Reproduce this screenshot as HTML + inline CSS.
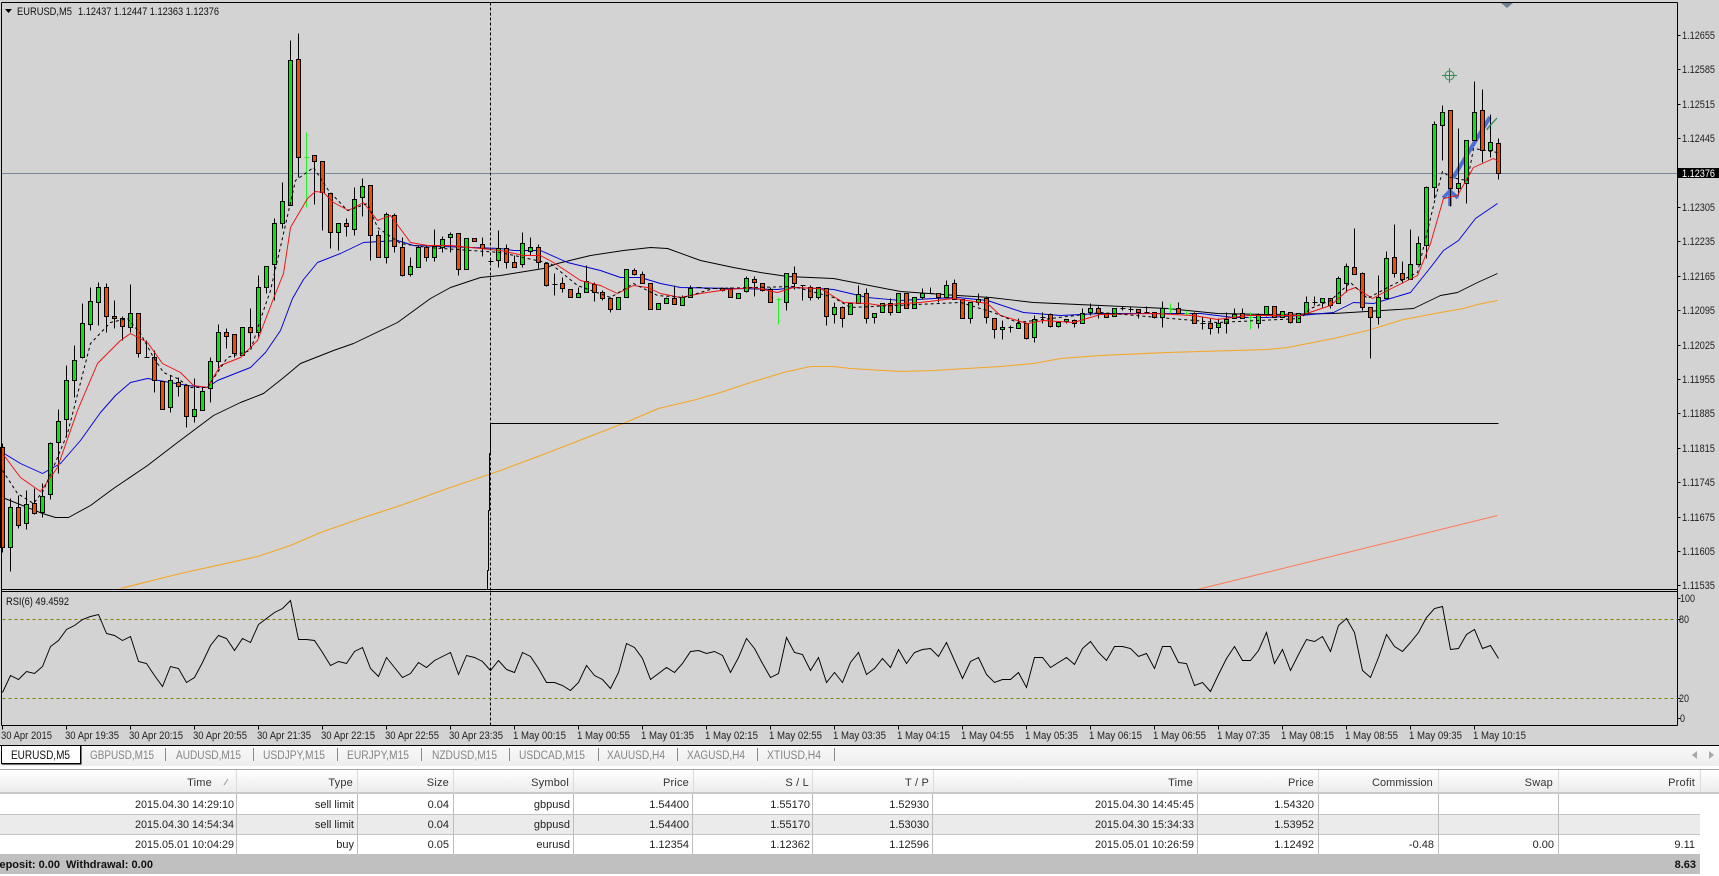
<!DOCTYPE html>
<html><head><meta charset="utf-8"><title>EURUSD,M5</title>
<style>
html,body{margin:0;padding:0;background:#fff;width:1719px;height:876px;overflow:hidden}
svg{display:block;position:absolute;left:0;top:0}
text{font-family:"Liberation Sans",sans-serif;font-size:11px;fill:#111}
.ax text{font-size:11px;fill:#222}
.tb text{font-size:11px;fill:#222;text-anchor:end}
.hd text{font-size:11px;fill:#333;text-anchor:end;letter-spacing:.2px}
.tab text{font-size:11.5px;fill:#858585}
</style></head><body>
<svg width="1719" height="876" viewBox="0 0 1719 876" xmlns="http://www.w3.org/2000/svg">
<defs>
<linearGradient id="hg" x1="0" y1="0" x2="0" y2="1"><stop offset="0" stop-color="#ffffff"/><stop offset="1" stop-color="#ececec"/></linearGradient>
<linearGradient id="tg" x1="0" y1="0" x2="0" y2="1"><stop offset="0" stop-color="#f8f8f8"/><stop offset="1" stop-color="#eeeeee"/></linearGradient>
</defs>
<rect x="0" y="0" width="1719" height="746" fill="#d3d3d3"/>

<g fill="none" stroke-linejoin="round" transform="translate(.5 .5)">
<path d="M1 173H1677" stroke="#778899"/>
<path d="M120 588L180 573L257 556L290 545L320 532L363 517L400 505L447 488L500 470L548 452L625 422L658 408L692 400L720 392L750 382L783 372L810 366L833 366L850 368L900 371L933 370L1000 366L1033 363L1060 358L1100 355L1167 352L1200 351L1267 349L1287 347L1333 338L1367 330L1403 319L1440 312L1463 308L1477 304L1497 300" stroke="#f5a623" stroke-width="1.1"/>
<path d="M1197 589L1497 515" stroke="#ff7a50" stroke-width="1"/>
<path d="M2 497L42 513L55 517L68 517L90 505L113 488L147 465L177 442L213 415L240 402L263 393L282 378L300 363L333 350L353 343L397 322L430 298L450 287L480 277L500 275L543 268L557 263L590 255L623 250L650 247L667 248L700 260L733 267L760 272L787 276L833 278L900 291L957 295L990 297L1033 302L1100 305L1167 308L1217 313L1267 314L1333 313L1350 312L1413 308L1440 295L1457 292L1477 282L1497 273" stroke="#000" stroke-width=".95"/>
<path d="M490 423H1498M490 423V453H489V510H488V570H487V589" stroke="#000"/>
<path d="M2 452L20 463L42 473L60 463L80 440L100 412L115 395L130 382L147 378L187 385L207 387L217 380L250 367L265 352L280 330L292 298L303 279L317 262L340 253L363 242L397 240L413 245L500 248L513 250L540 250L567 262L600 270L620 277L640 277L660 283L680 287L733 288L777 289L793 287L817 288L833 289L867 297L900 300L933 298L957 297L987 300L1023 312L1060 315L1100 313L1167 313L1200 313L1233 317L1267 317L1300 315L1333 312L1353 302L1373 303L1400 295L1410 292L1430 267L1443 250L1458 240L1475 218L1497 203" stroke="#0000d8" stroke-width=".95"/>
</g>

<!-- blue trade markers (behind candles) -->
<path d="M1453 178L1490 117" stroke="#4a6ed8" stroke-width="4" fill="none"/>
<path d="M1443 198L1450 191L1458 198M1450 189V206" stroke="#4a6ed8" stroke-width="3.6" fill="none"/>

<!-- wicks -->
<path transform="translate(.5 .5)" fill="none" stroke="#000" d="M2 443V552M10 498V571M18 495V528M26 490V529M34 488V514M42 483V517M50 442V499M58 409V473M66 365V437M74 345V397M82 303V358M90 287V330M98 282V325M106 283V332M114 300V328M122 316V340M130 284V332M138 313V357M146 340V357M154 350V392M162 381V409M170 375V412M178 377V396M186 385V427M194 378V422M202 387V410M210 357V402M218 324V368M226 328V348M234 334V357M242 327V355M250 308V347M258 275V337M266 266V293M274 218V300M282 182V228M290 40V205M298 33V177M314 155V204M322 161V230M330 193V248M338 223V250M346 218V236M354 187V235M362 178V216M370 185V260M378 230V257M386 212V263M394 213V252M402 237V276M410 257V276M418 245V267M426 245V261M434 229V261M442 236V252M450 232V252M458 233V275M466 238V269M474 238V241M482 237V256M490 257V265M498 230V267M506 244V268M514 255V267M522 232V267M530 237V255M538 244V268M546 263V286M554 273V295M562 277V292M570 289V297M578 287V297M586 265V292M594 282V301M602 290V300M610 297V312M618 297V309M626 269V297M634 268V275M642 271V283M650 283V309M658 303V309M666 297V303M674 285V304M682 295V305M690 285V297M722 287V291M730 287V297M738 293V298M746 276V292M754 276V296M762 283V291M770 287V302M786 273V310M794 266V289M802 285V300M810 285V300M818 287V299M826 288V325M834 302V323M842 306V327M850 303V314M858 285V303M866 288V323M874 313V323M882 303V312M890 298V315M898 293V312M906 293V308M914 297V308M922 288V299M930 287V293M938 293V302M946 280V298M954 279V299M962 299V318M970 302V323M978 293V305M986 296V323M994 318V338M1002 320V339M1010 325V332M1018 318V328M1026 323V339M1034 315V342M1042 312V323M1050 313V327M1058 322V327M1066 319V323M1074 319V327M1082 308V323M1090 303V315M1098 306V318M1106 313V317M1114 308V316M1122 306V310M1130 306V312M1138 309V318M1146 306V313M1154 312V318M1162 301V327M1178 302V313M1194 312V323M1202 317V329M1210 318V334M1218 318V333M1226 312V333M1234 308V318M1242 308V318M1258 313V328M1266 306V316M1274 306V317M1282 311V317M1290 312V323M1298 313V322M1306 296V313M1314 296V305M1322 298V307M1330 298V308M1338 276V303M1346 263V292M1354 228V274M1362 272V310M1370 307V358M1378 275V324M1386 251V298M1394 224V277M1402 261V283M1410 229V279M1418 236V264M1426 186V258M1434 121V198M1442 105V160M1450 110V206M1458 128V195M1466 140V203M1474 81V140M1482 89V162M1490 114V157M1498 138V179"/>
<!-- doji ticks -->
<path transform="translate(.5 .5)" fill="none" stroke="#000" d="M144 357h5M488 261h5M552 284h5M696 287h5M704 288h5M712 288h5M800 285h5M928 293h5M1008 327h5M1040 317h5M1120 308h5M1128 309h5M1144 312h5M1200 323h5M1312 302h5"/>
<!-- lime dojis -->
<path transform="translate(.5 .5)" fill="none" stroke="#22f522" d="M306 132V207M304 157h5M778 297V324M776 299h5M1170 303V313M1168 308h5M1186 310V315M1184 313h5M1250 312V329M1248 317h5"/>
<!-- green bodies -->
<path transform="translate(.5 .5)" fill="#0de40d" stroke="#000" d="M8 507h4V547h-4zM24 504h4V523h-4zM40 496h4V512h-4zM48 443h4V494h-4zM56 421h4V442h-4zM64 380h4V419h-4zM72 360h4V380h-4zM80 323h4V357h-4zM88 301h4V324h-4zM96 287h4V302h-4zM128 313h4V327h-4zM168 380h4V407h-4zM192 409h4V416h-4zM200 391h4V410h-4zM208 361h4V388h-4zM216 332h4V361h-4zM240 327h4V355h-4zM256 287h4V332h-4zM264 266h4V287h-4zM272 223h4V264h-4zM280 201h4V223h-4zM288 60h4V205h-4zM336 223h4V232h-4zM352 199h4V229h-4zM360 186h4V197h-4zM384 214h4V257h-4zM408 266h4V274h-4zM416 247h4V267h-4zM432 246h4V257h-4zM440 239h4V247h-4zM448 234h4V237h-4zM464 238h4V269h-4zM496 248h4V260h-4zM520 243h4V264h-4zM528 247h4V251h-4zM576 293h4V297h-4zM584 281h4V292h-4zM616 297h4V309h-4zM624 269h4V297h-4zM656 303h4V309h-4zM664 298h4V303h-4zM680 297h4V305h-4zM688 288h4V297h-4zM736 293h4V298h-4zM744 278h4V291h-4zM784 273h4V302h-4zM816 287h4V297h-4zM832 307h4V314h-4zM848 303h4V314h-4zM856 294h4V303h-4zM872 313h4V317h-4zM880 303h4V312h-4zM896 293h4V312h-4zM912 297h4V308h-4zM920 293h4V297h-4zM944 285h4V297h-4zM968 302h4V318h-4zM976 299h4V302h-4zM1000 327h4V329h-4zM1016 323h4V328h-4zM1032 319h4V337h-4zM1056 322h4V326h-4zM1064 319h4V321h-4zM1080 313h4V323h-4zM1088 308h4V312h-4zM1112 308h4V316h-4zM1160 308h4V317h-4zM1216 323h4V327h-4zM1224 319h4V323h-4zM1232 314h4V318h-4zM1256 314h4V323h-4zM1264 306h4V314h-4zM1280 311h4V317h-4zM1296 313h4V322h-4zM1304 302h4V313h-4zM1320 298h4V302h-4zM1336 278h4V303h-4zM1344 266h4V283h-4zM1376 297h4V317h-4zM1384 258h4V298h-4zM1408 264h4V279h-4zM1416 243h4V264h-4zM1424 187h4V245h-4zM1432 124h4V187h-4zM1440 112h4V125h-4zM1456 183h4V188h-4zM1464 140h4V183h-4zM1472 112h4V140h-4zM1488 142h4V150h-4z"/>
<!-- red bodies -->
<path transform="translate(.5 .5)" fill="#f04c0c" stroke="#000" d="M0 447h4V547h-4zM16 507h4V525h-4zM32 503h4V513h-4zM104 287h4V316h-4zM112 316h4V318h-4zM120 318h4V326h-4zM136 313h4V353h-4zM152 357h4V380h-4zM160 381h4V409h-4zM176 382h4V386h-4zM184 385h4V416h-4zM224 332h4V336h-4zM232 334h4V353h-4zM248 327h4V332h-4zM296 59h4V157h-4zM312 155h4V161h-4zM320 161h4V192h-4zM328 193h4V232h-4zM344 223h4V226h-4zM368 185h4V235h-4zM376 235h4V257h-4zM392 215h4V246h-4zM400 247h4V275h-4zM424 247h4V257h-4zM456 233h4V269h-4zM472 238h4V241h-4zM480 244h4V248h-4zM504 248h4V262h-4zM512 262h4V267h-4zM536 247h4V262h-4zM544 263h4V285h-4zM560 283h4V288h-4zM568 289h4V297h-4zM592 284h4V292h-4zM600 292h4V298h-4zM608 298h4V309h-4zM632 270h4V274h-4zM640 274h4V283h-4zM648 283h4V309h-4zM672 298h4V304h-4zM720 288h4V290h-4zM728 289h4V297h-4zM752 279h4V282h-4zM760 283h4V290h-4zM768 289h4V302h-4zM792 273h4V283h-4zM808 287h4V297h-4zM824 288h4V316h-4zM840 307h4V318h-4zM864 293h4V318h-4zM888 303h4V312h-4zM904 293h4V308h-4zM936 293h4V297h-4zM952 283h4V299h-4zM960 299h4V318h-4zM984 298h4V317h-4zM992 318h4V329h-4zM1024 323h4V338h-4zM1048 314h4V326h-4zM1072 320h4V323h-4zM1096 308h4V313h-4zM1104 313h4V317h-4zM1136 309h4V312h-4zM1152 312h4V317h-4zM1176 308h4V313h-4zM1192 313h4V323h-4zM1208 323h4V328h-4zM1240 313h4V318h-4zM1272 306h4V317h-4zM1288 312h4V322h-4zM1328 298h4V305h-4zM1352 267h4V274h-4zM1360 273h4V307h-4zM1368 307h4V317h-4zM1392 257h4V273h-4zM1400 273h4V279h-4zM1448 110h4V188h-4zM1480 110h4V150h-4zM1496 143h4V173h-4z"/>

<!-- MA overlays -->
<g fill="none" stroke-linejoin="round" transform="translate(.5 .5)">
<path d="M2 453L20 477L40 491L57 467L77 410L97 363L120 340L130 333L147 342L162 363L180 372L193 385L207 387L220 365L240 357L257 340L273 298L283 273L290 227L307 198L315 191L323 192L333 202L348 210L363 202L377 220L390 215L410 242L427 245L450 245L500 250L523 255L540 255L553 262L580 280L600 285L617 293L633 285L647 287L660 293L680 297L700 293L727 289L753 287L777 292L793 287L820 288L843 302L867 303L880 305L900 303L920 302L953 298L987 303L1000 315L1027 323L1043 320L1073 322L1100 314L1153 313L1193 315L1217 319L1247 315L1300 315L1330 305L1347 290L1355 287L1372 298L1387 290L1417 275L1430 243L1443 198L1457 195L1473 167L1493 158L1498 161" stroke="#f01010" stroke-width=".95"/>
<path d="M2 470L17 493L33 503L43 490L57 457L67 433L90 343L110 322L127 318L140 333L153 357L163 372L177 378L190 387L207 387L227 357L250 350L263 310L270 290L283 233L295 180L313 167L328 190L347 210L367 203L377 227L400 243L427 247L500 252L550 263L577 285L610 297L633 283L657 295L683 297L713 288L793 286L833 297L850 307L960 302L993 312L1017 322L1100 312L1217 322L1300 318L1310 308L1330 300L1350 282L1367 298L1387 287L1417 272L1435 197L1442 171L1450 177L1467 180L1473 148L1497 152" stroke="#000" stroke-dasharray="3 3"/>
</g>

<!-- markers on top -->
<path d="M1487 130L1490 125M1487 129L1497 118" stroke="#2e8b57" stroke-width="1.3" fill="none"/>
<g stroke="#2e8b57" fill="none"><circle cx="1449.5" cy="75.5" r="4.5"/><path d="M1442 75.5H1457M1449.5 68V83"/></g>
<path d="M1501 3h12l-6 5z" fill="#708090"/>

<!-- frame -->
<g transform="translate(.5 .5)" fill="none" stroke="#000">
<path d="M1 2H1677M1 2V725M1677 2V725M1 589H1677M1 591H1677M1 725H1677"/>
<path d="M490 2V725" stroke-dasharray="3 2"/>
</g>
<path d="M5 9h7l-3.5 4z" fill="#000"/>
<text x="17" y="15" textLength="55" lengthAdjust="spacingAndGlyphs">EURUSD,M5</text>
<text x="78" y="15" textLength="141" lengthAdjust="spacingAndGlyphs">1.12437 1.12447 1.12363 1.12376</text>

<!-- price axis -->
<path transform="translate(.5 .5)" stroke="#000" d="M1677 35h3M1677 69h3M1677 104h3M1677 138h3M1677 207h3M1677 241h3M1677 276h3M1677 310h3M1677 345h3M1677 379h3M1677 413h3M1677 448h3M1677 482h3M1677 517h3M1677 551h3M1677 585h3M1677 598h3M1677 619h3M1677 698h3M1677 718h3"/>
<g class="ax">
<text x="1682" y="39" textLength="33" lengthAdjust="spacingAndGlyphs">1.12655</text>
<text x="1682" y="73" textLength="33" lengthAdjust="spacingAndGlyphs">1.12585</text>
<text x="1682" y="108" textLength="33" lengthAdjust="spacingAndGlyphs">1.12515</text>
<text x="1682" y="142" textLength="33" lengthAdjust="spacingAndGlyphs">1.12445</text>
<text x="1682" y="211" textLength="33" lengthAdjust="spacingAndGlyphs">1.12305</text>
<text x="1682" y="245" textLength="33" lengthAdjust="spacingAndGlyphs">1.12235</text>
<text x="1682" y="280" textLength="33" lengthAdjust="spacingAndGlyphs">1.12165</text>
<text x="1682" y="314" textLength="33" lengthAdjust="spacingAndGlyphs">1.12095</text>
<text x="1682" y="349" textLength="33" lengthAdjust="spacingAndGlyphs">1.12025</text>
<text x="1682" y="383" textLength="33" lengthAdjust="spacingAndGlyphs">1.11955</text>
<text x="1682" y="417" textLength="33" lengthAdjust="spacingAndGlyphs">1.11885</text>
<text x="1682" y="452" textLength="33" lengthAdjust="spacingAndGlyphs">1.11815</text>
<text x="1682" y="486" textLength="33" lengthAdjust="spacingAndGlyphs">1.11745</text>
<text x="1682" y="521" textLength="33" lengthAdjust="spacingAndGlyphs">1.11675</text>
<text x="1682" y="555" textLength="33" lengthAdjust="spacingAndGlyphs">1.11605</text>
<text x="1682" y="589" textLength="33" lengthAdjust="spacingAndGlyphs">1.11535</text>
<text x="1680" y="602" textLength="15" lengthAdjust="spacingAndGlyphs">100</text>
<text x="1679" y="623" textLength="10" lengthAdjust="spacingAndGlyphs">80</text>
<text x="1679" y="702" textLength="10" lengthAdjust="spacingAndGlyphs">20</text>
<text x="1680" y="722" textLength="5" lengthAdjust="spacingAndGlyphs">0</text>
</g>
<rect x="1678" y="168" width="41" height="10" fill="#000"/>
<text x="1682" y="177" textLength="33" lengthAdjust="spacingAndGlyphs" style="fill:#fff">1.12376</text>

<!-- RSI -->
<text x="6" y="605" textLength="63" lengthAdjust="spacingAndGlyphs">RSI(6) 49.4592</text>
<path transform="translate(.5 .5)" d="M2 619H1677M2 698H1677" stroke="#808000" stroke-dasharray="3 3" fill="none"/>
<polyline transform="translate(.5 .5)" fill="none" stroke="#000" stroke-width=".95" points="2,692 10,675 18,679 26,671 34,673 42,666 50,646 58,640 66,629 74,625 82,619 90,616 98,614 106,633 114,635 122,640 130,636 138,661 146,663 154,675 162,686 170,666 178,668 186,682 194,677 202,662 210,645 218,635 226,638 234,650 242,638 250,642 258,624 266,618 274,612 282,608 290,600 298,639 306,639 314,640 322,652 330,665 338,661 346,663 354,651 362,647 370,668 378,676 386,657 394,667 402,677 410,673 418,662 426,667 434,660 442,656 450,652 458,674 466,655 474,657 482,661 490,670 498,660 506,669 514,672 522,652 530,656 538,668 546,682 554,682 562,685 570,690 578,682 586,665 594,675 602,679 610,688 618,672 626,643 634,647 642,658 650,679 658,673 666,667 674,672 682,663 690,651 698,650 706,653 714,651 722,655 730,672 738,657 746,638 754,648 762,663 770,677 778,673 786,637 794,652 802,654 810,670 818,657 826,682 834,672 842,682 850,662 858,652 866,674 874,668 882,658 890,667 898,649 906,663 914,652 922,649 930,648 938,656 946,642 954,660 962,678 970,661 978,657 986,674 994,682 1002,679 1010,679 1018,672 1026,687 1034,657 1042,657 1050,667 1058,662 1066,657 1074,664 1082,648 1090,641 1098,652 1106,660 1114,646 1122,646 1130,648 1138,656 1146,653 1154,668 1162,646 1170,646 1178,662 1186,663 1194,685 1202,682 1210,691 1218,674 1226,658 1234,646 1242,660 1250,660 1258,650 1266,632 1274,663 1282,649 1290,670 1298,654 1306,639 1314,641 1322,636 1330,651 1338,625 1346,618 1354,632 1362,670 1370,677 1378,657 1386,634 1394,646 1402,651 1410,642 1418,632 1426,617 1434,608 1442,606 1450,649 1458,648 1466,634 1474,629 1482,648 1490,645 1498,658"/>

<!-- time axis -->
<path transform="translate(.5 .5)" stroke="#000" d="M2 725v4M66 725v4M130 725v4M194 725v4M258 725v4M322 725v4M386 725v4M450 725v4M514 725v4M578 725v4M642 725v4M706 725v4M770 725v4M834 725v4M898 725v4M962 725v4M1026 725v4M1090 725v4M1154 725v4M1218 725v4M1282 725v4M1346 725v4M1410 725v4M1474 725v4"/>
<g class="ax">
<text x="1" y="739" textLength="51" lengthAdjust="spacingAndGlyphs">30 Apr 2015</text>
<text x="65" y="739" textLength="54" lengthAdjust="spacingAndGlyphs">30 Apr 19:35</text>
<text x="129" y="739" textLength="54" lengthAdjust="spacingAndGlyphs">30 Apr 20:15</text>
<text x="193" y="739" textLength="54" lengthAdjust="spacingAndGlyphs">30 Apr 20:55</text>
<text x="257" y="739" textLength="54" lengthAdjust="spacingAndGlyphs">30 Apr 21:35</text>
<text x="321" y="739" textLength="54" lengthAdjust="spacingAndGlyphs">30 Apr 22:15</text>
<text x="385" y="739" textLength="54" lengthAdjust="spacingAndGlyphs">30 Apr 22:55</text>
<text x="449" y="739" textLength="54" lengthAdjust="spacingAndGlyphs">30 Apr 23:35</text>
<text x="513" y="739" textLength="53" lengthAdjust="spacingAndGlyphs">1 May 00:15</text>
<text x="577" y="739" textLength="53" lengthAdjust="spacingAndGlyphs">1 May 00:55</text>
<text x="641" y="739" textLength="53" lengthAdjust="spacingAndGlyphs">1 May 01:35</text>
<text x="705" y="739" textLength="53" lengthAdjust="spacingAndGlyphs">1 May 02:15</text>
<text x="769" y="739" textLength="53" lengthAdjust="spacingAndGlyphs">1 May 02:55</text>
<text x="833" y="739" textLength="53" lengthAdjust="spacingAndGlyphs">1 May 03:35</text>
<text x="897" y="739" textLength="53" lengthAdjust="spacingAndGlyphs">1 May 04:15</text>
<text x="961" y="739" textLength="53" lengthAdjust="spacingAndGlyphs">1 May 04:55</text>
<text x="1025" y="739" textLength="53" lengthAdjust="spacingAndGlyphs">1 May 05:35</text>
<text x="1089" y="739" textLength="53" lengthAdjust="spacingAndGlyphs">1 May 06:15</text>
<text x="1153" y="739" textLength="53" lengthAdjust="spacingAndGlyphs">1 May 06:55</text>
<text x="1217" y="739" textLength="53" lengthAdjust="spacingAndGlyphs">1 May 07:35</text>
<text x="1281" y="739" textLength="53" lengthAdjust="spacingAndGlyphs">1 May 08:15</text>
<text x="1345" y="739" textLength="53" lengthAdjust="spacingAndGlyphs">1 May 08:55</text>
<text x="1409" y="739" textLength="53" lengthAdjust="spacingAndGlyphs">1 May 09:35</text>
<text x="1473" y="739" textLength="53" lengthAdjust="spacingAndGlyphs">1 May 10:15</text>
</g>

<!-- tabs -->
<rect x="0" y="745" width="1719" height="1" fill="#000"/>
<rect x="0" y="746" width="1719" height="20" fill="url(#tg)"/>
<rect x="1.5" y="745.5" width="79" height="18" fill="#fff" stroke="#000"/>
<path d="M81 746V764H2" stroke="#000" fill="none"/>
<g class="tab">
<text x="11" y="759" textLength="59" lengthAdjust="spacingAndGlyphs" style="fill:#111">EURUSD,M5</text>
<text x="90" y="759" textLength="64" lengthAdjust="spacingAndGlyphs">GBPUSD,M15</text>
<text x="176" y="759" textLength="65" lengthAdjust="spacingAndGlyphs">AUDUSD,M15</text>
<text x="263" y="759" textLength="62" lengthAdjust="spacingAndGlyphs">USDJPY,M15</text>
<text x="347" y="759" textLength="62" lengthAdjust="spacingAndGlyphs">EURJPY,M15</text>
<text x="432" y="759" textLength="65" lengthAdjust="spacingAndGlyphs">NZDUSD,M15</text>
<text x="519" y="759" textLength="66" lengthAdjust="spacingAndGlyphs">USDCAD,M15</text>
<text x="607" y="759" textLength="58" lengthAdjust="spacingAndGlyphs">XAUUSD,H4</text>
<text x="687" y="759" textLength="58" lengthAdjust="spacingAndGlyphs">XAGUSD,H4</text>
<text x="767" y="759" textLength="54" lengthAdjust="spacingAndGlyphs">XTIUSD,H4</text>
</g>
<path transform="translate(.5 0)" stroke="#8a8a8a" d="M165 748V761M253 748V761M337 748V761M421 748V761M509 748V761M598 748V761M677 748V761M757 748V761M834 748V761"/>
<path d="M1697 751v8l-5-4zM1709 751v8l5-4z" fill="#a8a8a8"/>

<!-- table -->
<rect x="0" y="766" width="1719" height="110" fill="#fff"/>
<rect x="0" y="769" width="1719" height="1" fill="#a6a6a6"/>
<rect x="0" y="770" width="1719" height="22" fill="url(#hg)"/>
<rect x="0" y="792" width="1719" height="2" fill="#c9c9c9"/>
<path transform="translate(.5 0)" stroke="#dcdcdc" d="M236 770V792M357 770V792M453 770V792M573 770V792M693 770V792M812 770V792M933 770V792M1197 770V792M1318 770V792M1438 770V792M1558 770V792M1700 770V792"/>
<rect x="0" y="814" width="1700" height="20" fill="#ebebeb"/>
<rect x="0" y="814" width="1700" height="1" fill="#c4c4c4"/>
<rect x="0" y="834" width="1700" height="1" fill="#c4c4c4"/>
<path transform="translate(.5 0)" stroke="#bdbdbd" d="M236 794V854M357 794V854M453 794V854M573 794V854M692 794V854M812 794V854M932 794V854M1197 794V854M1318 794V854M1438 794V854M1558 794V854"/>
<rect x="0" y="854" width="1700" height="20" fill="#c0c0c0"/>

<g class="hd">
<text x="212" y="786">Time</text>
<text x="353" y="786">Type</text>
<text x="449" y="786">Size</text>
<text x="569" y="786">Symbol</text>
<text x="689" y="786">Price</text>
<text x="809" y="786">S / L</text>
<text x="929" y="786">T / P</text>
<text x="1193" y="786">Time</text>
<text x="1314" y="786">Price</text>
<text x="1433" y="786" textLength="61">Commission</text>
<text x="1553" y="786">Swap</text>
<text x="1695" y="786">Profit</text>
</g>
<path d="M224 785l4-6" stroke="#999" fill="none"/>

<g class="tb">
<text x="234" y="808" textLength="99" lengthAdjust="spacingAndGlyphs">2015.04.30 14:29:10</text>
<text x="354" y="808">sell limit</text>
<text x="449" y="808">0.04</text>
<text x="570" y="808">gbpusd</text>
<text x="689" y="808">1.54400</text>
<text x="810" y="808">1.55170</text>
<text x="929" y="808">1.52930</text>
<text x="1194" y="808" textLength="99" lengthAdjust="spacingAndGlyphs">2015.04.30 14:45:45</text>
<text x="1314" y="808">1.54320</text>

<text x="234" y="828" textLength="99" lengthAdjust="spacingAndGlyphs">2015.04.30 14:54:34</text>
<text x="354" y="828">sell limit</text>
<text x="449" y="828">0.04</text>
<text x="570" y="828">gbpusd</text>
<text x="689" y="828">1.54400</text>
<text x="810" y="828">1.55170</text>
<text x="929" y="828">1.53030</text>
<text x="1194" y="828" textLength="99" lengthAdjust="spacingAndGlyphs">2015.04.30 15:34:33</text>
<text x="1314" y="828">1.53952</text>

<text x="234" y="848" textLength="99" lengthAdjust="spacingAndGlyphs">2015.05.01 10:04:29</text>
<text x="354" y="848">buy</text>
<text x="449" y="848">0.05</text>
<text x="570" y="848">eurusd</text>
<text x="689" y="848">1.12354</text>
<text x="810" y="848">1.12362</text>
<text x="929" y="848">1.12596</text>
<text x="1194" y="848" textLength="99" lengthAdjust="spacingAndGlyphs">2015.05.01 10:26:59</text>
<text x="1314" y="848">1.12492</text>
<text x="1434" y="848">-0.48</text>
<text x="1554" y="848">0.00</text>
<text x="1695" y="848">9.11</text>
</g>

<text x="60" y="868" text-anchor="end" font-weight="bold">Deposit: 0.00</text>
<text x="66" y="868" font-weight="bold" textLength="87">Withdrawal: 0.00</text>
<text x="1696" y="868" text-anchor="end" font-weight="bold">8.63</text>
</svg>
</body></html>
